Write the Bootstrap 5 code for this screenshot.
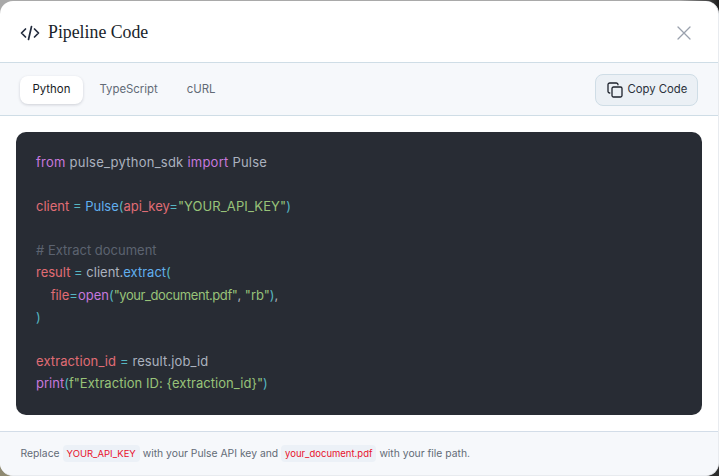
<!DOCTYPE html>
<html lang="en">
<head>
<meta charset="utf-8">
<title>Pipeline Code</title>
<link rel="stylesheet" href="https://cdn.jsdelivr.net/npm/bootstrap@5.3.0/dist/css/bootstrap.min.css">
<style>
html,body{height:100%;margin:0;overflow:hidden}
body{background:
  linear-gradient(90deg,#a9a9a9 0,#a9a9a9 680px,#1d1d1d 719px) top/100% 30px no-repeat,
  linear-gradient(90deg,#8f8a72 0,#8f8a72 50%,#2c2c2c 100%);
  font-family:Inter,"Liberation Sans",sans-serif}
.shell{width:719px;height:475px;margin-top:1px;background:#fff;border-radius:13px;overflow:hidden;display:flex;flex-direction:column;border-right:1px solid #e8ebef;border-bottom:1px solid #e8ebef}
.head{height:61px;flex:none;padding:2px 20px 0}
.head-title{font-family:"Liberation Serif",serif;font-size:17.8px;font-weight:400;color:#1a1f2b;margin:0;line-height:1}
.head-x{background:none;border:0;padding:0;line-height:0;color:#9aa1ad;margin-right:7px}
.tabbar{height:54px;flex:none;background:#f6f8fb;border-top:1px solid #cfdde6;border-bottom:1px solid #cfdde6;padding:1px 20.5px 0 20px}
.tab-btn{font-size:11.4px;line-height:1;padding:0 12.5px;height:28px;border:0;border-radius:8px;background:transparent;color:#626a76;margin-right:4px}
.tab-btn.on{background:#fff;color:#171b24;box-shadow:0 1px 3px rgba(20,30,50,.18)}
.copy-btn{font-size:11.3px;height:32px;width:103px;padding:0 0 0 11px;border:1px solid #cfdde6;border-radius:8px;background:#ebf0f5;color:#2a303b;white-space:nowrap;gap:5px}
.code-wrap{flex:1;padding:16px 16px 15px}
.code-box{background:#282c34;border-radius:10px;height:283px;margin:0;padding:19px 20px;font-family:Inter,"Liberation Sans",sans-serif;font-size:13px;line-height:22.1px;color:#abb2bf;overflow:hidden;white-space:pre}
.tk-key{color:#c678dd}.tk-var{color:#e06c75}.tk-op{color:#56b6c2}.tk-fn{color:#61afef}.tk-str{color:#98c379}.tk-com{color:#5c6370}
.ls-wide{letter-spacing:.24px}.ls-some{letter-spacing:.1px}.ls-fine{letter-spacing:.05px}.ls-tight{letter-spacing:-.42px}
.foot{height:44px;flex:none;background:#f6f8fb;border-top:1px solid #d3dde8;padding:0 20.5px;font-size:10.35px;color:#636b77}
.foot code{display:inline-block;font-family:Inter,"Liberation Sans",sans-serif;font-size:9.5px;line-height:13px;color:#e8112d;background:#ecf1f7;border-radius:4px;padding:2px 4px}
</style>
</head>
<body>
<div class="shell">
  <div class="head d-flex align-items-center justify-content-between">
    <div class="d-flex align-items-center gap-2">
      <svg width="20" height="20" viewBox="0 0 20 20" fill="none" stroke="#222b3d" stroke-width="1.7" stroke-linecap="round" stroke-linejoin="round"><path d="M5.5 6 1.5 10l4 4M14.5 6l4 4-4 4M11.5 3.5l-3 13"/></svg>
      <h1 class="head-title">Pipeline Code</h1>
    </div>
    <button class="head-x" aria-label="Close"><svg width="14" height="14" viewBox="0 0 14 14" fill="none" stroke="currentColor" stroke-width="1.3" stroke-linecap="round"><path d="M1 1l12 12M13 1 1 13"/></svg></button>
  </div>
  <div class="tabbar d-flex align-items-center justify-content-between">
    <div class="d-flex align-items-center">
      <button class="tab-btn on">Python</button>
      <button class="tab-btn">TypeScript</button>
      <button class="tab-btn">cURL</button>
    </div>
    <button class="copy-btn d-flex align-items-center">
      <svg width="16" height="16" viewBox="0 0 16 16" fill="none" stroke="#1c212b" stroke-width="1.3" stroke-linejoin="round" stroke-linecap="round"><rect x="5" y="5" width="10" height="10" rx="1.5"/><path d="M2.8 11A1.8 1.8 0 0 1 1 9.2V2.8A1.8 1.8 0 0 1 2.8 1h6.4A1.8 1.8 0 0 1 11 2.8"/></svg>
      <span>Copy Code</span>
    </button>
  </div>
  <div class="code-wrap">
<pre class="code-box"><span class="ls-wide"><span class="tk-key">from</span> pulse_python_sdk <span class="tk-key">import</span> Pulse</span>

<span class="tk-var">client</span> <span class="tk-op">=</span> <span class="tk-fn">Pulse</span><span class="tk-op">(</span><span class="tk-var">api_key</span><span class="tk-op">=</span><span class="tk-str ls-some">"YOUR_API_KEY"</span><span class="tk-op">)</span>

<span class="tk-com"># Extract document</span>
<span class="tk-var">result</span> <span class="tk-op">=</span> client.<span class="tk-fn">extract</span><span class="tk-op">(</span>
    <span class="tk-var">file</span><span class="tk-op">=</span><span class="tk-key">open</span><span class="tk-op">(</span><span class="tk-str ls-tight">"your_document.pdf"</span>, <span class="tk-str">"rb"</span><span class="tk-op">)</span>,
<span class="tk-op">)</span>

<span class="ls-some"><span class="tk-var">extraction_id</span> <span class="tk-op">=</span> result.job_id</span>
<span class="tk-key">print</span><span class="tk-op">(</span><span class="tk-str ls-fine">f"Extraction ID: {extraction_id}"</span><span class="tk-op">)</span></pre>
  </div>
  <div class="foot d-flex align-items-center">
    <span>Replace <code>YOUR_API_KEY</code> with your Pulse API key and <code>your_document.pdf</code> with your file path.</span>
  </div>
</div>
<script src="https://cdn.jsdelivr.net/npm/bootstrap@5.3.0/dist/js/bootstrap.bundle.min.js"></script>
</body>
</html>
